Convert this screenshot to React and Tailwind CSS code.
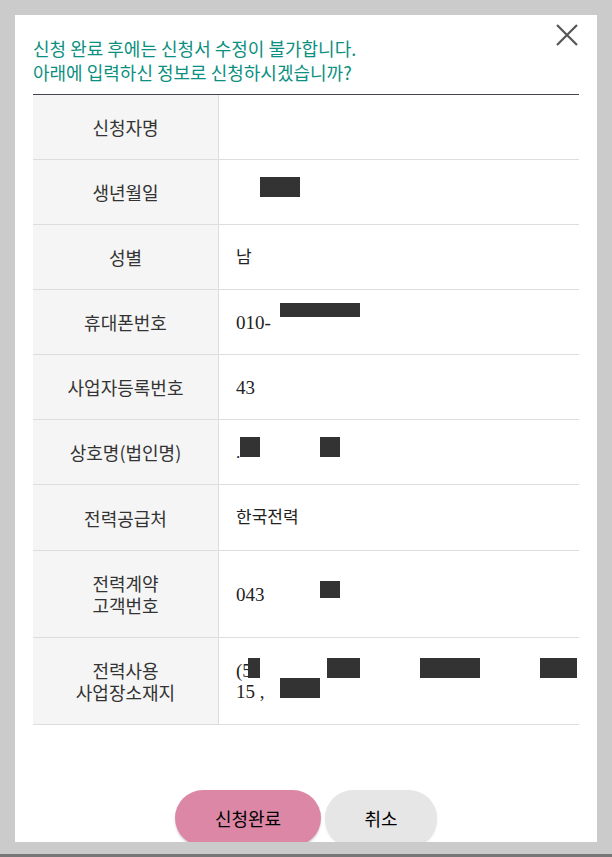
import React from "react";

const SANS = "font-['Noto_Sans_CJK_KR','Noto_Sans',sans-serif]";
const VALUE = "font-['Liberation_Serif','Noto_Sans_CJK_KR',serif]";

// redaction boxes sit over the value text, so they are placed on top of the cell
const rows = [
  { label: ["신청자명"], h: "h-[65px]" },
  { label: ["생년월일"], h: "h-[65px]", masks: [{ l: 41, t: 17, w: 40, h: 20 }] },
  { label: ["성별"], h: "h-[65px]", value: ["남"] },
  { label: ["휴대폰번호"], h: "h-[65px]", value: ["010-"], num: true, masks: [{ l: 61, t: 13, w: 80, h: 14 }] },
  { label: ["사업자등록번호"], h: "h-[65px]", value: ["43"], num: true },
  {
    label: ["상호명(법인명)"],
    h: "h-[65px]",
    value: ["."],
    masks: [
      { l: 21, t: 17, w: 20, h: 20 },
      { l: 101, t: 17, w: 20, h: 20 },
    ],
  },
  { label: ["전력공급처"], h: "h-[66px]", value: ["한국전력"] },
  { label: ["전력계약", "고객번호"], h: "h-[87px]", value: ["043"], num: true, masks: [{ l: 101, t: 30, w: 20, h: 17 }] },
  {
    label: ["전력사용", "사업장소재지"],
    h: "h-[87px]",
    value: ["(5", "15 ,"],
    num: true,
    masks: [
      { l: 29, t: 20, w: 12, h: 20 },
      { l: 108, t: 20, w: 33, h: 20 },
      { l: 201, t: 20, w: 60, h: 20 },
      { l: 321, t: 20, w: 37, h: 20 },
      { l: 61, t: 40, w: 40, h: 20 },
    ],
  },
];

function Row({ label, value, masks, h, num }) {
  return (
    <div className={`grid grid-cols-[186px_1fr] border-b border-[#dddddd] ${h}`}>
      <div className={`flex flex-col items-center justify-center border-r border-[#dddddd] bg-[#f5f5f5] text-[18px] text-[#333333] ${SANS}`}>
        {label.map((l) => (
          <p key={l} className="h-[22px] leading-[22px]">
            {l}
          </p>
        ))}
      </div>
      <div
        className={`relative flex flex-col justify-center pl-[17px] text-[#222222] ${VALUE} ${
          num ? "text-[19px]" : "text-[17px]"
        }`}
      >
        {(value || []).map((v, i) => (
          <p key={i} className="h-[21px] leading-[21px]">
            {v}
          </p>
        ))}
        {(masks || []).map((m, i) => (
          <span
            key={i}
            className="absolute bg-[#333333]"
            style={{ left: m.l, top: m.t, width: m.w, height: m.h }}
          />
        ))}
      </div>
    </div>
  );
}

export default function App() {
  return (
    <div className="box-border h-[857px] w-[612px] overflow-hidden border-b-[3px] border-[#777777] bg-[#cbcbcb] pl-[15px] pt-[15px]">
      <div className="relative h-[827px] w-[582px] overflow-hidden bg-white px-[18px] pt-[21px]">
        <button className="absolute right-[19px] top-[9px] text-[#555555]">
          <svg width="22" height="22" viewBox="0 0 22 22" fill="none" stroke="currentColor" strokeWidth="2.2">
            <path d="M1 1L21 21M21 1L1 21" />
          </svg>
        </button>

        <p className={`text-[18px] leading-[24px] text-[#0b8f80] ${SANS}`}>
          신청 완료 후에는 신청서 수정이 불가합니다.
          <br />
          아래에 입력하신 정보로 신청하시겠습니까?
        </p>

        <div className="mt-[10px] border-t border-[#444455]">
          {rows.map((r) => (
            <Row key={r.label.join("")} {...r} />
          ))}
        </div>

        <div className={`mt-[65px] flex justify-center gap-[4px] text-[18px] text-black ${SANS}`}>
          <button className="h-[56px] w-[146px] rounded-full bg-[#dd87a6] shadow-[0_2px_2px_rgba(0,0,0,0.18)]">
            신청완료
          </button>
          <button className="h-[56px] w-[112px] rounded-full bg-[#e6e6e6] shadow-[0_2px_2px_rgba(0,0,0,0.12)]">
            취소
          </button>
        </div>
      </div>
    </div>
  );
}
